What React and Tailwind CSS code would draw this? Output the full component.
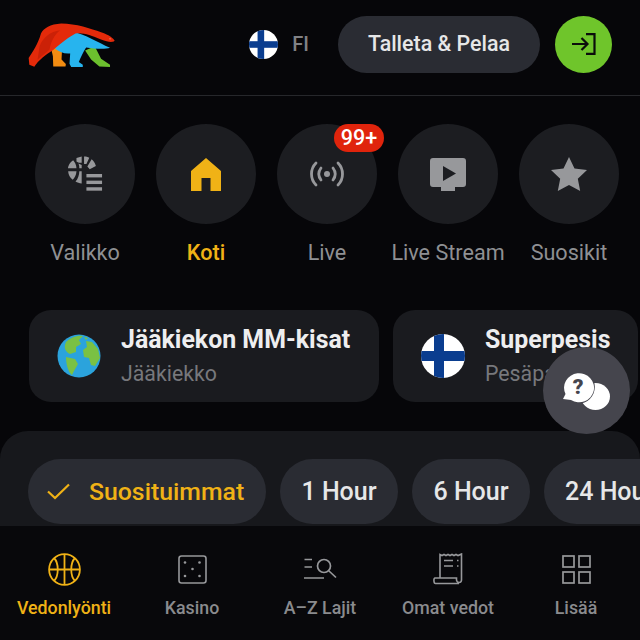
const Y = "#f0b216";
const G = "#97989b";

function Bear() {
  return (
    <svg width="88" height="47" viewBox="25 20 265 140" className="mt-[2px]">
      <path d="M95 100 L128 92 L126 132 L139 146 L138 153 L101 153 L100 122Z" fill="#f28c12" />
      <path d="M197 105 L226 92 L245 130 L272 148 L272 155 L240 153 L215 132Z" fill="#6cbf2e" />
      <path d="M104 97 C120 82 145 66 165 50 C195 56 235 80 272 97 C258 102 225 100 200 96 C192 108 184 125 178 140 L190 148 L190 155 L155 155 L150 145 L152 114 C135 116 118 110 104 97Z" fill="#27b4ee" />
      <path d="M27 128 L29 148 L44 154 C56 134 78 118 100 104 C120 88 145 66 168 54 C190 50 215 60 245 72 C265 80 280 82 286 76 C284 70 270 58 245 50 C215 40 170 24 125 24 C92 26 72 38 64 54 C56 85 38 110 27 128Z" fill="#e42a0a" />
      <path d="M60 92 C70 66 92 48 122 44 C104 58 94 78 90 102 C80 112 66 122 54 132Z" fill="#cb2107" />
      <circle cx="272" cy="70" r="2" fill="#f7a08c" />
    </svg>
  );
}

function FlagFI({ size }) {
  return (
    <svg width={size} height={size} viewBox="0 0 44 44" className="shrink-0">
      <defs>
        <clipPath id={`c${size}`}><circle cx="22" cy="22" r="22" /></clipPath>
      </defs>
      <g clipPath={`url(#c${size})`}>
        <rect width="44" height="44" fill="#fff" />
        <rect x="13" width="10" height="44" fill="#0a3d8f" />
        <rect y="17" width="44" height="10" fill="#0a3d8f" />
      </g>
    </svg>
  );
}

function Globe() {
  return (
    <svg width="44" height="44" viewBox="0 0 44 44" className="shrink-0">
      <circle cx="22" cy="22" r="21.5" fill="#2ba3dc" />
      <path d="M9 8 C13 4 20 1 26 2 L22 6 L24 10 L19 13 L19 18 L13 20 C9 18 6 14 9 8Z" fill="#7ac143" />
      <path d="M9 23 L18 25 L21 30 L17 37 L15 41 C11 38 9 30 9 23Z" fill="#7ac143" />
      <path d="M29 7 L35 8 L41 15 L43 24 L38 32 L34 31 L32 24 L27 23 L26 16 L30 13Z" fill="#7ac143" />
      <path d="M27 3 L31 4 L29 6Z" fill="#7ac143" />
    </svg>
  );
}

function ValikkoIcon() {
  return (
    <svg width="36" height="36" viewBox="0 0 38 38" fill={G}>
      <path d="M10 2 L15.5 0.6 L15.5 7 C13.5 7.5 11.5 7 10 5.8Z M18 0.5 C20 0.5 22 1 23.5 1.8 L20.5 8.5 L18 8.5Z M26 3.5 C28 5 29.5 7.5 30.5 10.5 L24 14 L21.5 11 Z" />
      <path d="M6.5 4.5 C8 6.5 10 9 10 13 L1 13 C1.3 10 3 7 6.5 4.5Z M1.2 16 L10 16 C9.8 20 8 23 6 25 C3 23 1.5 19.5 1.2 16Z M13 16 L15.5 16 L15.5 29 C13 29 11 28 9 27 C11.5 24 13 20 13 16Z M13 13 C13 10 12.5 9 12 8 L15.5 9.5 L15.5 13Z" />
      <rect x="20.5" y="19" width="16.5" height="3.6" />
      <rect x="20.5" y="26" width="16.5" height="3.6" />
      <rect x="20.5" y="33" width="16.5" height="3.6" />
    </svg>
  );
}

function HomeIcon() {
  return (
    <svg width="30" height="33" viewBox="0 0 30 33" fill={Y}>
      <path d="M15 0 L30 13 L30 33 L19.5 33 L19.5 20 L10.5 20 L10.5 33 L0 33 L0 13Z" />
    </svg>
  );
}

function LiveIcon() {
  return (
    <svg width="36" height="28" viewBox="0 0 36 28" fill="none" stroke={G} strokeWidth="2.8" strokeLinecap="round">
      <path d="M7 3 C1 9 1 19 7 25" />
      <path d="M29 3 C35 9 35 19 29 25" />
      <path d="M12 8 C9 12 9 16 12 20" />
      <path d="M24 8 C27 12 27 16 24 20" />
      <circle cx="18" cy="14" r="3" fill={G} stroke="none" />
    </svg>
  );
}

function StreamIcon() {
  return (
    <svg width="36" height="33" viewBox="0 0 36 33">
      <path d="M3 0 H33 A3 3 0 0 1 36 3 V26 A3 3 0 0 1 33 29 H25 V33 H11 V29 H3 A3 3 0 0 1 0 26 V3 A3 3 0 0 1 3 0Z" fill={G} />
      <path d="M13 8 L26 15.5 L13 23Z" fill="#1c1d21" />
    </svg>
  );
}

function StarIcon() {
  return (
    <svg width="36" height="34" viewBox="0 0 36 34" fill={G}>
      <path d="M18 0 L23.5 11.5 L36 13 L26.8 21.7 L29.2 34 L18 28 L6.8 34 L9.2 21.7 L0 13 L12.5 11.5Z" />
    </svg>
  );
}

function ChatIcon() {
  return (
    <svg width="50" height="42" viewBox="0 0 50 42" className="absolute left-[19px] top-[25px]">
      <ellipse cx="33.5" cy="24.5" rx="14.5" ry="13.5" fill="#fff" />
      <circle cx="16" cy="15" r="16.8" fill="#45454d" />
      <path d="M1 27 L3.5 22 A15 14.5 0 1 1 9 28 Z" fill="#fff" />
      <text x="16" y="21.5" textAnchor="middle" fontFamily="Roboto, sans-serif" fontWeight="900" fontSize="21" fill="#45454d">?</text>
    </svg>
  );
}

function BallIcon() {
  return (
    <svg width="33" height="33" viewBox="0 0 33 33" fill="none" stroke={Y} strokeWidth="1.8">
      <circle cx="16.5" cy="16.5" r="15.4" />
      <path d="M16.5 1 V32 M1 16.5 H32" />
      <path d="M6 5 C11 10 11 23 6 28" />
      <path d="M27 5 C22 10 22 23 27 28" />
    </svg>
  );
}

function DiceIcon() {
  return (
    <svg width="29" height="29" viewBox="0 0 29 29" fill={G}>
      <rect x="1" y="1" width="27" height="27" rx="2.5" fill="none" stroke={G} strokeWidth="1.6" />
      <circle cx="7" cy="7.5" r="1.3" />
      <circle cx="21.5" cy="7.5" r="1.3" />
      <circle cx="14.5" cy="14" r="1.3" />
      <circle cx="7" cy="21" r="1.3" />
      <circle cx="21.5" cy="21" r="1.3" />
    </svg>
  );
}

function SearchListIcon() {
  return (
    <svg width="33" height="22" viewBox="0 0 33 22" fill="none" stroke={G} strokeWidth="1.7">
      <path d="M0.5 1.5 H8 M0.5 9 H8 M0 20 H20" />
      <circle cx="20" cy="8" r="6.5" />
      <path d="M25 13 L32 19.5" />
    </svg>
  );
}

function ReceiptIcon() {
  return (
    <svg width="30" height="32" viewBox="0 0 30 32" fill="none" stroke={G} strokeWidth="1.6">
      <path d="M7 25 V1.5 L9 2.5 L11 1.5 L13 2.5 L15 1.5 L17 2.5 L19 1.5 L21 2.5 L23 1.5 L25 2.5 L28.5 1 V27 C28.5 30 24 30.5 23.5 27 L23.5 25 H2 C0.5 25 0.5 30.5 2.5 30.5 H26" />
      <path d="M11 7.5 H20 M11 13 H20 M24 7.5 H25.5 M24 13 H25.5" />
    </svg>
  );
}

function GridIcon() {
  return (
    <svg width="29" height="29" viewBox="0 0 29 29" fill="none" stroke={G} strokeWidth="1.7">
      <rect x="1" y="1" width="11" height="11" />
      <rect x="17" y="1" width="11" height="11" />
      <rect x="1" y="17" width="11" height="11" />
      <rect x="17" y="17" width="11" height="11" />
    </svg>
  );
}

function Shortcut({ icon, label, active, badge }) {
  return (
    <div className="relative flex w-[100px] shrink-0 flex-col items-center">
      <div className="flex h-[100px] w-[100px] items-center justify-center rounded-full bg-[#1c1d21]">{icon}</div>
      {badge && (
        <div className="absolute left-[57px] top-0 flex h-[28px] w-[50px] items-center justify-center rounded-full bg-[#e0240c] text-[21.5px] font-medium leading-none text-white">
          {badge}
        </div>
      )}
      <div className={`mt-[16px] whitespace-nowrap text-[21.6px] leading-[26px] ${active ? "font-medium text-[#f0b216]" : "text-[#8f9093]"}`}>{label}</div>
    </div>
  );
}

function Card({ icon, title, sub, width }) {
  return (
    <div className={`flex h-[92px] shrink-0 items-center gap-[20px] rounded-[22px] bg-[#1a1b1f] pl-[28px] ${width}`}>
      {icon}
      <div>
        <div className="whitespace-nowrap text-[24.9px] font-bold leading-[31px] text-[#eeeeef]">{title}</div>
        <div className="mt-[4px] whitespace-nowrap text-[21.3px] leading-[30px] text-[#77787c]">{sub}</div>
      </div>
    </div>
  );
}

function Pill({ children, className }) {
  return <div className={`flex h-[65px] shrink-0 items-center whitespace-nowrap rounded-full bg-[#2a2c33] font-medium ${className}`}>{children}</div>;
}

function NavItem({ icon, label, active }) {
  return (
    <div className="flex w-[128px] flex-col items-center">
      <div className="flex h-[34px] items-center justify-center">{icon}</div>
      <div className={`mt-[11px] whitespace-nowrap text-[17.8px] font-medium leading-[22px] ${active ? "text-[#f0b216]" : "text-[#8a8b8e]"}`}>{label}</div>
    </div>
  );
}

export default function App() {
  return (
    <div className="relative flex h-[640px] w-[640px] flex-col overflow-hidden bg-[#060609] font-['Roboto',sans-serif]">
      <header className="flex h-[96px] shrink-0 items-center border-b border-[#26272b] pb-[7px] pl-[28px] pr-[28px]">
        <Bear />
        <div className="ml-auto flex items-center">
          <FlagFI size={29} />
          <span className="ml-[14px] text-[20px] font-medium text-[#808185]">FI</span>
        </div>
        <div className="ml-[29px] flex h-[57px] w-[202px] items-center justify-center rounded-full bg-[#2a2c33] text-[21.4px] font-medium text-[#e6e7e8]">
          Talleta &amp; Pelaa
        </div>
        <div className="ml-[15px] flex h-[57px] w-[57px] items-center justify-center rounded-full bg-[#6fc52b]">
          <svg width="24" height="22" viewBox="0 0 24 22" fill="none" stroke="#0b0d0b" strokeWidth="2.2">
            <path d="M14 1.2 H22.5 V20.8 H14" />
            <path d="M0 11 H15 M9.5 5 L15.5 11 L9.5 17" />
          </svg>
        </div>
      </header>

      <div className="flex shrink-0 gap-[21px] pl-[35px] pt-[28px]">
        <Shortcut icon={<ValikkoIcon />} label="Valikko" />
        <Shortcut icon={<HomeIcon />} label="Koti" active />
        <Shortcut icon={<LiveIcon />} label="Live" badge="99+" />
        <Shortcut icon={<StreamIcon />} label="Live Stream" />
        <Shortcut icon={<StarIcon />} label="Suosikit" />
      </div>

      <div className="mt-[44px] flex shrink-0 gap-[14px] pl-[29px]">
        <Card icon={<Globe />} title="Jääkiekon MM-kisat" sub="Jääkiekko" width="w-[350px]" />
        <Card icon={<FlagFI size={44} />} title="Superpesis" sub="Pesäpallo" width="w-[245px]" />
      </div>

      <div className="mt-[29px] flex h-[95px] shrink-0 gap-[14px] rounded-t-[28px] bg-[#17181c] pl-[28px] pt-[28px]">
        <Pill className="w-[238px] pl-[19px] text-[24.8px] text-[#f0b216]">
          <svg width="23" height="17" viewBox="0 0 23 17" fill="none" stroke={Y} strokeWidth="2.2" className="mr-[19px]">
            <path d="M1 8.5 L8 15 L22 1.5" />
          </svg>
          Suosituimmat
        </Pill>
        <Pill className="w-[118px] justify-center text-[25px] text-[#e6e7e8]">1 Hour</Pill>
        <Pill className="w-[118px] justify-center text-[25px] text-[#e6e7e8]">6 Hour</Pill>
        <Pill className="w-[130px] pl-[21px] text-[25px] text-[#e6e7e8]">24 Hour</Pill>
      </div>

      <nav className="flex flex-1 bg-[#08080b] pt-[26px]">
        <NavItem icon={<BallIcon />} label="Vedonlyönti" active />
        <NavItem icon={<DiceIcon />} label="Kasino" />
        <NavItem icon={<SearchListIcon />} label="A–Z Lajit" />
        <NavItem icon={<ReceiptIcon />} label="Omat vedot" />
        <NavItem icon={<GridIcon />} label="Lisää" />
      </nav>

      <div className="absolute left-[543px] top-[347px] h-[87px] w-[87px] rounded-full bg-[#45454d]">
        <ChatIcon />
      </div>
    </div>
  );
}
